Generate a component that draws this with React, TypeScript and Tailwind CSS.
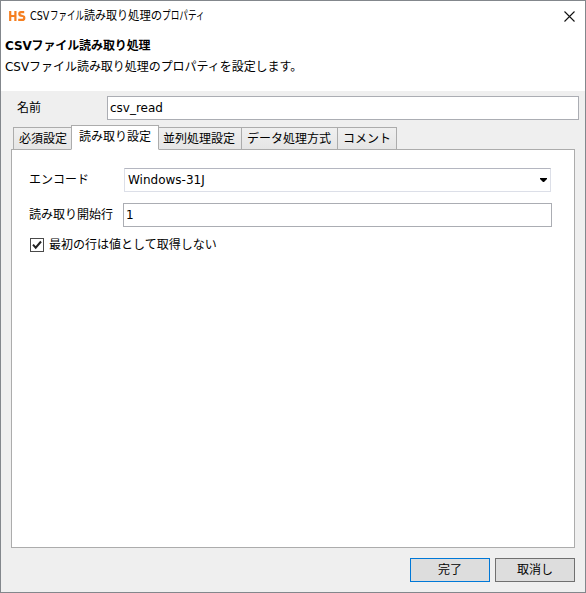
import { clsx } from "clsx";

const tabs = [
  { label: "必須設定", width: "w-[59px]", pad: "pl-[5px]" },
  { label: "読み取り設定", width: "w-[88px]", pad: "pl-[7px]" },
  { label: "並列処理設定", width: "w-[84px]", pad: "pl-1" },
  { label: "データ処理方式", width: "w-[97px]", pad: "pl-[5px]" },
  { label: "コメント", width: "w-[60px]", pad: "pl-[5px]" },
];

const activeTab = "読み取り設定";

const caption = [
  { text: "CSV", box: "w-5", scale: "scale-x-[0.8]" },
  { text: "ファイル", box: "w-[34px]", scale: "scale-x-[0.71]" },
  { text: "読み取り", box: "w-[44px]", scale: "scale-x-[0.92]" },
  { text: "処理の", box: "w-[34px]", scale: "scale-x-[0.95]" },
  { text: "プロパティ", box: "w-[43px]", scale: "scale-x-[0.72]" },
];

function TitleBar() {
  return (
    <div className="flex h-[30px] shrink-0 items-center pl-2 pr-[10px]">
      <svg width="17" height="10" viewBox="0 0 17 10" className="mr-1 shrink-0" fill="none" stroke="#f57f20" strokeWidth="2.2">
        <path d="M1.2 0V10M6.4 0V10M1.2 5H6.4" />
        <path d="M15.2 1.1H12C9.8 1.1 9.7 4.3 12 4.6L13.6 5C16 5.5 15.8 8.9 13.4 8.9H9.2" />
      </svg>
      <h1 className="flex h-[18px] whitespace-nowrap leading-[18px]">
        {caption.map((part) => (
          <span key={part.text} className={clsx("block", part.box)}>
            <span className={clsx("inline-block origin-left", part.scale)}>{part.text}</span>
          </span>
        ))}
      </h1>
      <button className="ml-auto" title="閉じる">
        <svg width="11" height="11" viewBox="0 0 11 11" stroke="#111" strokeWidth="1.1">
          <path d="M.5 .5L10.5 10.5M10.5 .5L.5 10.5" />
        </svg>
      </button>
    </div>
  );
}

function Header() {
  return (
    <div className="h-[60px] shrink-0 whitespace-nowrap pl-1 pt-[6px]">
      <h2 className="font-bold leading-[18px] tracking-[-0.12px]">CSVファイル読み取り処理</h2>
      <p className="mt-[3px] leading-[18px] tracking-[-0.04px]">CSVファイル読み取り処理のプロパティを設定します。</p>
    </div>
  );
}

function TabBar() {
  return (
    <div className="relative z-10 -mb-px ml-[2px] flex h-[25px] items-end">
      {tabs.map((tab, i) => (
        <button
          key={tab.label}
          className={clsx(
            "shrink-0 whitespace-nowrap border border-[#acacac] text-left",
            tab.width,
            tab.pad,
            i > 0 && "-ml-px",
            tab.label === activeTab
              ? "relative z-10 h-[25px] border-b-white bg-white pb-[2px]"
              : "h-[23px] bg-linear-to-b from-[#f0f0f0] to-[#e5e5e5]"
          )}
        >
          {tab.label}
        </button>
      ))}
    </div>
  );
}

function SettingsPanel() {
  return (
    <div className="flex-1 border border-[#acacac] bg-white pl-[17px] pr-[22px] pt-[18px]">
      <div className="flex items-center">
        <label className="w-[95px] shrink-0">エンコード</label>
        <div className="mr-px flex h-6 flex-1 items-center border border-[#dcdfe8] border-t-[#b4b6c0] pl-[3px] pr-[3px]">
          <span>Windows-31J</span>
          <svg width="7" height="4" viewBox="0 0 7 4" className="ml-auto">
            <path d="M0 0H7V1L4 4H3L0 1Z" fill="#000" />
          </svg>
        </div>
      </div>
      <div className="mt-[11px] flex items-center">
        <label className="w-[94px] shrink-0">読み取り開始行</label>
        <div className="flex h-6 flex-1 items-center border border-[#abadb3] pl-[2px]">1</div>
      </div>
      <div className="mt-[9px] flex h-[18px] items-center pl-px">
        <span className="mr-[5px] flex h-[14px] w-[14px] items-center justify-center border border-[#4a4a4a]">
          <svg width="10" height="10" viewBox="0 0 10 10" fill="none" stroke="#222" strokeWidth="2">
            <path d="M1 4.7L3.7 7.7L9 1.5" />
          </svg>
        </span>
        <span>最初の行は値として取得しない</span>
      </div>
    </div>
  );
}

export default function App() {
  return (
    <div className="flex h-[593px] w-[586px] flex-col overflow-hidden border border-[#83878c] bg-white font-['DejaVu_Sans','Noto_Sans_CJK_JP',sans-serif] text-[12px] leading-[18px] text-black">
      <TitleBar />
      <Header />
      <div className="flex flex-1 flex-col bg-[#efefef] px-[10px] pb-[10px] pt-[5px]">
        <div className="-mr-[4px] flex items-center pl-[6px]">
          <label className="w-[90px] shrink-0">名前</label>
          <div className="flex h-6 flex-1 items-center border border-[#abadb3] bg-white pl-[2px]">csv_read</div>
        </div>
        <div className="mt-[5px] flex flex-1 flex-col">
          <TabBar />
          <SettingsPanel />
        </div>
        <div className="mt-[10px] flex justify-end gap-[5px]">
          <button className="h-6 w-20 border border-[#0078d7] bg-[#dddddd] text-center">完了</button>
          <button className="h-6 w-20 border border-[#707070] bg-[#dddddd] text-center">取消し</button>
        </div>
      </div>
    </div>
  );
}
